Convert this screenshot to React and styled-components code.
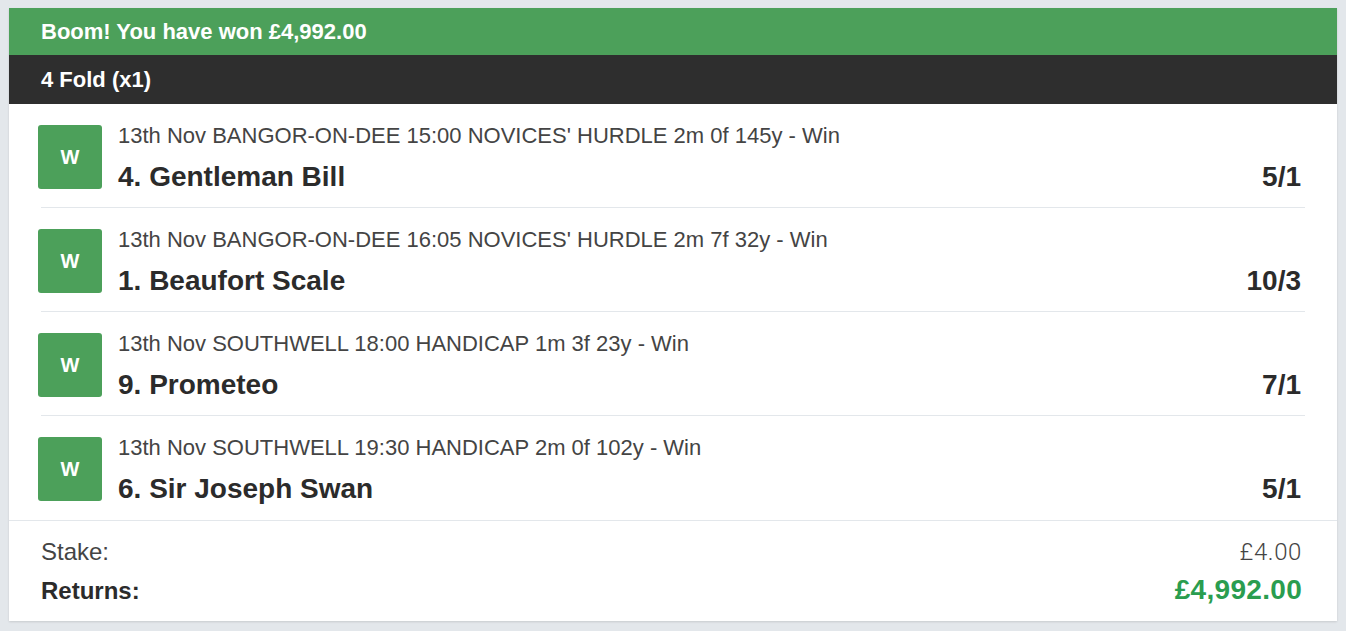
import React from 'react'
import styled, { createGlobalStyle } from 'styled-components'

const GlobalStyle = createGlobalStyle`
    body {
        margin: 0;
        padding: 8px 9px;
        background: #e3e7eb;
        font-family: "Liberation Sans", Arial, sans-serif;
    }
`

const Card = styled.div`
    background: #ffffff;
    box-shadow: 0 1px 2px rgba(0, 0, 0, 0.12);
`

const Banner = styled.div`
    height: ${props => props.height}px;
    display: flex;
    align-items: center;
    padding: 0 32px;
    background: ${props => props.bg};
    color: #ffffff;
    font-size: 22px;
    font-weight: 700;
`

const Legs = styled.div`
    padding: 0 32px;
    border-bottom: 1px solid #e3e7eb;
`

const Leg = styled.div`
    display: flex;
    align-items: flex-start;
    gap: 16px;
    padding: 20px 0 15px;
    border-bottom: 1px solid #e3e7eb;

    &:last-child {
        border-bottom: none;
        padding-bottom: 16px;
    }
`

const Badge = styled.div`
    width: 64px;
    height: 64px;
    margin: 1px 0 0 -3px;
    flex-shrink: 0;
    border-radius: 3px;
    background: #4ca05a;
    color: #ffffff;
    font-size: 20px;
    font-weight: 700;
    display: flex;
    align-items: center;
    justify-content: center;
`

const LegInfo = styled.div`
    flex: 1;
    display: flex;
    flex-direction: column;
`

const Meta = styled.div`
    font-size: 22px;
    line-height: 24px;
    color: #444444;
`

const SelectionRow = styled.div`
    display: flex;
    justify-content: space-between;
    align-items: baseline;
    margin-top: 14px;
    padding-right: 4px;
    line-height: 30px;
    color: #2b2b2b;
    font-weight: 700;
`

const Selection = styled.span`
    font-size: 28px;
`

const Odds = styled.span`
    font-size: 28px;
`

const Summary = styled.div`
    padding: 19px 35px 15px 32px;
    display: flex;
    flex-direction: column;
`

const SummaryRow = styled.div`
    display: flex;
    justify-content: space-between;
    align-items: baseline;
    margin-top: ${props => props.gap || 0}px;
    line-height: ${props => props.lh}px;
`

const Label = styled.span`
    font-size: 24px;
    color: ${props => props.bold ? '#2b2b2b' : '#444444'};
    font-weight: ${props => props.bold ? 700 : 400};
`

const Amount = styled.span`
    font-family: ${props => props.big ? '"Liberation Sans", Arial, sans-serif' : 'Roboto, sans-serif'};
    font-size: ${props => props.big ? 28 : 24}px;
    font-weight: ${props => props.big ? 700 : 300};
    letter-spacing: ${props => props.big ? 0.3 : 0.6}px;
    color: ${props => props.big ? '#2a9d4f' : '#444444'};
`

const legs = [
    { meta: "13th Nov BANGOR-ON-DEE 15:00 NOVICES' HURDLE 2m 0f 145y - Win", name: '4. Gentleman Bill', odds: '5/1' },
    { meta: "13th Nov BANGOR-ON-DEE 16:05 NOVICES' HURDLE 2m 7f 32y - Win", name: '1. Beaufort Scale', odds: '10/3' },
    { meta: '13th Nov SOUTHWELL 18:00 HANDICAP 1m 3f 23y - Win', name: '9. Prometeo', odds: '7/1' },
    { meta: '13th Nov SOUTHWELL 19:30 HANDICAP 2m 0f 102y - Win', name: '6. Sir Joseph Swan', odds: '5/1' },
]

export default function App() {
    return (
        <>
            <GlobalStyle />
            <Card>
                <Banner bg="#4ca05a" height={47}>Boom! You have won £4,992.00</Banner>
                <Banner bg="#2e2e2e" height={49}>4 Fold (x1)</Banner>
                <Legs>
                    {legs.map(leg => (
                        <Leg key={leg.name}>
                            <Badge>W</Badge>
                            <LegInfo>
                                <Meta>{leg.meta}</Meta>
                                <SelectionRow>
                                    <Selection>{leg.name}</Selection>
                                    <Odds>{leg.odds}</Odds>
                                </SelectionRow>
                            </LegInfo>
                        </Leg>
                    ))}
                </Legs>
                <Summary>
                    <SummaryRow lh={24}>
                        <Label>Stake:</Label>
                        <Amount>£4.00</Amount>
                    </SummaryRow>
                    <SummaryRow lh={30} gap={11}>
                        <Label bold>Returns:</Label>
                        <Amount big>£4,992.00</Amount>
                    </SummaryRow>
                </Summary>
            </Card>
        </>
    )
}
